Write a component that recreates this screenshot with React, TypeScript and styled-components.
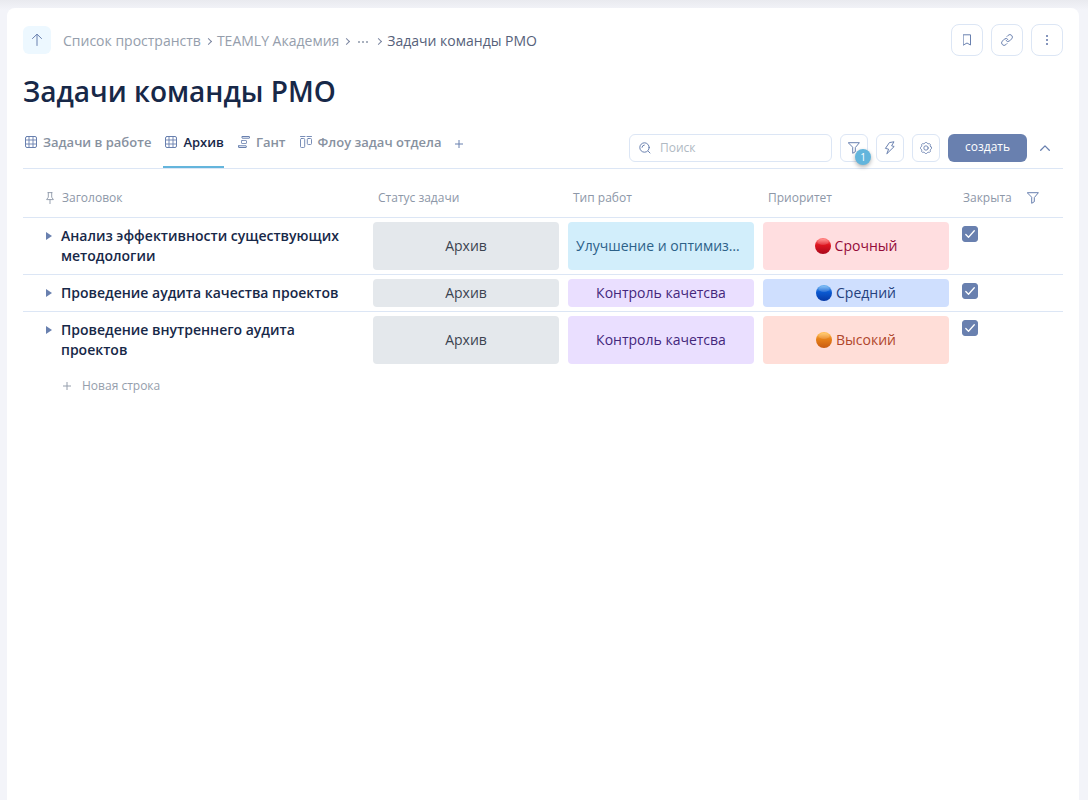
import React from "react";
import styled, { createGlobalStyle, css } from "styled-components";

const GlobalStyle = createGlobalStyle`
  *, *::before, *::after { box-sizing: border-box; }
  body {
    margin: 0;
    background: #f3f4f9;
    color: #172848;
    font-family: "Open Sans", "Noto Sans", sans-serif;
    font-size: 14px;
    line-height: 20px;
  }
  button, input { font: inherit; }
`;

const Page = styled.div`
  display: flex;
  flex-direction: column;
  min-height: 100vh;
  padding: 8px 9px 0 7px;
  background: linear-gradient(#e9eaef, #f3f4f9) top / 100% 10px no-repeat;
`;

const Card = styled.main`
  flex: 1;
  padding: 16px;
  background: #fff;
  border-radius: 8px 8px 0 0;
`;

const TopBar = styled.header`
  display: flex;
  align-items: center;
  justify-content: space-between;
  height: 32px;
`;

const Row = styled.div<{ $gap: number }>`
  display: flex;
  align-items: center;
  gap: ${(p) => p.$gap}px;
`;

const PlainButton = styled.button`
  display: flex;
  align-items: center;
  justify-content: center;
  flex: none;
  padding: 0;
  border: 0;
  background: none;
  color: #6980af;
  cursor: pointer;
`;

const UpButton = styled(PlainButton)`
  width: 28px;
  height: 28px;
  border-radius: 6px;
  background: #edf8ff;
`;

const OutlineButton = styled(PlainButton)<{ $size: number }>`
  position: relative;
  width: ${(p) => p.$size}px;
  height: ${(p) => p.$size}px;
  border: 1px solid #dce6f5;
  border-radius: ${(p) => (p.$size > 28 ? 8 : 6)}px;
`;

const Crumbs = styled.ol`
  display: flex;
  align-items: center;
  margin: 0;
  padding: 2px 0 0;
  list-style: none;
  color: #959eac;
`;

const Crumb = styled.li`
  display: flex;
  align-items: center;

  & + &::before {
    content: "";
    width: 5px;
    height: 5px;
    margin: 1px 6px 0 5px;
    border: solid #7b86a0;
    border-width: 1px 1px 0 0;
    transform: rotate(45deg);
  }
`;

const CrumbLink = styled.a`
  color: inherit;
  text-decoration: none;
  &[aria-current] { color: #56617a; }
`;

const Title = styled.h1`
  margin: 15px 0 0;
  font-size: 28px;
  font-weight: 600;
  line-height: 40px;
`;

const ViewBar = styled.div`
  display: flex;
  justify-content: space-between;
  gap: 16px;
  height: 58px;
  padding-top: 23px;
  border-bottom: 1px solid #dce6f5;
`;

const Tabs = styled.nav`
  display: flex;
  gap: 12px;
`;

const Tab = styled.a`
  display: flex;
  align-items: flex-start;
  gap: 6px;
  padding: 0 0 0 2px;
  border-bottom: 2px solid transparent;
  color: #8791a0;
  font-size: 13px;
  font-weight: 600;
  line-height: 16px;
  text-decoration: none;
  white-space: nowrap;

  svg { margin-top: 2px; color: #6980af; }

  &[aria-current] {
    border-color: #64b5dc;
    color: #172848;
  }
`;

const AddTab = styled(PlainButton)`
  width: 10px;
  height: 20px;
`;

const Search = styled.label`
  display: flex;
  align-items: center;
  gap: 9px;
  width: 203px;
  height: 28px;
  padding: 0 9px;
  border: 1px solid #dce6f5;
  border-radius: 6px;
  color: #6980af;
`;

const SearchInput = styled.input`
  flex: 1;
  min-width: 0;
  padding: 0;
  border: 0;
  outline: 0;
  background: none;
  color: #172848;
  font-size: 12px;
  &::placeholder { color: #b0b9c3; opacity: 1; }
`;

const Badge = styled.span`
  position: absolute;
  top: 14px;
  left: 14px;
  width: 16px;
  height: 16px;
  border-radius: 8px;
  background: #62b5dc;
  box-shadow: 0 2px 4px rgba(0, 0, 0, 0.3);
  color: #fff;
  font-size: 10px;
  line-height: 16px;
  text-align: center;
`;

const CreateButton = styled(PlainButton)`
  width: 79px;
  height: 28px;
  padding-bottom: 2px;
  border-radius: 6px;
  background: #6980af;
  color: #fff;
  font-size: 12px;
  font-weight: 500;
`;

const Collapse = styled(PlainButton)`
  width: 20px;
  height: 28px;
`;

const Tools = styled(Row)`
  height: 28px;
  padding-right: 8px;
`;

const Table = styled.table`
  width: 100%;
  table-layout: fixed;
  border-collapse: separate;
  border-spacing: 0;
`;

const Col = styled.col<{ $width?: number }>`
  ${(p) => p.$width && css`width: ${p.$width}px;`}
`;

const HeadCell = styled.th`
  height: 49px;
  padding: 10px 10px 0;
  border-bottom: 1px solid #dce6f5;
  color: #8d97a8;
  font-size: 12px;
  font-weight: 400;
  text-align: left;

  &:first-child { padding-left: 23px; }
`;

const Cell = styled.td`
  height: 1px;
  padding: 4px 4px 4px 5px;
  border-bottom: 1px solid #dce6f5;
  vertical-align: top;

  tr:last-child > & { border-bottom: 0; }
`;

const NameCell = styled(Cell)`
  padding: 8px 24px 8px 22px;
`;

const CheckCell = styled(Cell)`
  padding: 8px 9px;
`;

const TaskName = styled.div`
  display: flex;
  align-items: flex-start;
  gap: 9px;
  font-weight: 600;
`;

const Expand = styled(PlainButton)`
  width: 7px;
  height: 20px;
`;

type Tone = "gray" | "cyan" | "violet" | "red" | "blue" | "orange";

const tones: Record<Tone, [string, string]> = {
  gray: ["#e4e8ec", "#3b4350"],
  cyan: ["#d2eefb", "#2c6189"],
  violet: ["#eadfff", "#44277c"],
  red: ["#ffdee0", "#940a38"],
  blue: ["#cfdffe", "#24417d"],
  orange: ["#ffded8", "#b0462b"],
};

const Pill = styled.div<{ $tone: Tone }>`
  display: flex;
  align-items: center;
  justify-content: center;
  gap: 4px;
  height: 100%;
  min-height: 28px;
  padding: 0 8px;
  border-radius: 4px;
  background: ${(p) => tones[p.$tone][0]};
  color: ${(p) => tones[p.$tone][1]};
`;

const PillText = styled.span`
  overflow: hidden;
  text-overflow: ellipsis;
  white-space: nowrap;
`;

const CheckWrap = styled.label`
  display: grid;
  width: 16px;
  height: 16px;
  > * { grid-area: 1 / 1; }
  svg { z-index: 1; pointer-events: none; color: #fff; }
`;

const CheckBox = styled.input`
  appearance: none;
  width: 16px;
  height: 16px;
  margin: 0;
  border: 1px solid #6980af;
  border-radius: 3px;
  &:checked { background: #6980af; }
`;

const NewRow = styled(PlainButton)`
  gap: 11px;
  margin: 8px 0 0 40px;
  color: #959eac;
  font-size: 12px;
`;

const Icon = styled.svg`
  flex: none;
`;

const Svg = ({ w, h = w, children, ...rest }: { w: number; h?: number } & React.SVGProps<SVGSVGElement>) => (
  <Icon width={w} height={h} viewBox={`0 0 ${w} ${h}`} fill="none" stroke="currentColor" strokeLinecap="round" strokeLinejoin="round" aria-hidden="true" {...rest}>
    {children}
  </Icon>
);

const GridIcon = () => (
  <Svg w={12}>
    <rect x=".5" y=".5" width="11" height="11" rx="1.5" />
    <path d="M4 .5v11M8 .5v11M.5 4h11M.5 8h11" strokeWidth=".9" />
  </Svg>
);
const GanttIcon = () => (
  <Svg w={12}>
    <rect x="4" y=".5" width="7.500" height="1.700" rx=".3" />
    <rect x="3.500" y="4.500" width="5" height="3" rx=".5" strokeWidth=".8" />
    <rect x=".5" y="9.800" width="7.800" height="1.700" rx=".3" />
  </Svg>
);
const BoardIcon = () => (
  <Svg w={12} strokeWidth=".9">
    <path d="M.5.5h4.500M7 .5h4.500" />
    <rect x=".5" y="2.500" width="4.200" height="9" rx="1" />
    <rect x="7.300" y="2.500" width="4.200" height="6" rx="1" />
  </Svg>
);
const PlusIcon = ({ size = 8 }: { size?: number }) => (
  <Svg w={size} strokeLinecap="butt">
    <path d={`M${size / 2} 0v${size}M0 ${size / 2}h${size}`} />
  </Svg>
);
const FunnelIcon = () => (
  <Svg w={12}>
    <path d="M.6.7h10.800L7.300 5.600v4.100L4.700 11.300V5.600Z" />
  </Svg>
);
const BoltIcon = () => (
  <Svg w={12} h={14}>
    <path d="M5.800 1.500 10 .8 7.600 4.800 10.200 5.500 2.800 12.800 4.600 8.200 1.800 7.500Z" />
  </Svg>
);
const gear = Array.from({ length: 32 }, (_, i) => {
  const r = i % 4 < 2 ? 5.6 : 4.8;
  const a = ((i - 0.5) / 32) * Math.PI * 2;
  return `${(6 + r * Math.cos(a)).toFixed(2)},${(6 + r * Math.sin(a)).toFixed(2)}`;
}).join(" ");
const GearIcon = () => (
  <Svg w={12} strokeWidth=".9">
    <polygon points={gear} />
    <circle cx="6" cy="6" r="2.200" />
  </Svg>
);
const SearchIcon = () => (
  <Svg w={12}>
    <circle cx="5.500" cy="5.500" r="4.700" />
    <path d="M3 5.300A2.600 2.600 0 0 1 5.300 3M9.400 9.400 11 11" />
  </Svg>
);
const PinIcon = () => (
  <Svg w={8} h={12} strokeWidth=".9">
    <path d="M2 .6h4M2.300.6v4.600L.6 7.600h6.800L5.700 5.200V.6M4 7.600v4" />
  </Svg>
);

const balls: Record<string, string[]> = {
  red: ["#ff7776", "#df1620", "#a9081c"],
  blue: ["#68aef0", "#0b5bd3", "#0638a5"],
  orange: ["#ffbd55", "#e88219", "#c95b12"],
};
const Ball = ({ color }: { color: string }) => {
  const id = React.useId();
  return (
    <Svg w={16} stroke="none">
      <defs>
        <linearGradient id={id} x1="0" y1="0" x2="0" y2="1">
          <stop offset=".1" stopColor={balls[color][0]} />
          <stop offset=".42" stopColor={balls[color][1]} />
          <stop offset="1" stopColor={balls[color][2]} />
        </linearGradient>
      </defs>
      <circle cx="8" cy="8" r="8" fill={`url(#${id})`} />
      <ellipse cx="8" cy="4" rx="5.500" ry="3" fill="#fff" opacity=".15" />
    </Svg>
  );
};

const tasks: { name: string; type: [string, Tone]; priority: [string, Tone] }[] = [
  { name: "Анализ эффективности существующих методологии", type: ["Улучшение и оптимизация", "cyan"], priority: ["Срочный", "red"] },
  { name: "Проведение аудита качества проектов", type: ["Контроль качетсва", "violet"], priority: ["Средний", "blue"] },
  { name: "Проведение внутреннего аудита проектов", type: ["Контроль качетсва", "violet"], priority: ["Высокий", "orange"] },
];

export default function App() {
  return (
    <>
      <GlobalStyle />
      <Page>
        <Card>
          <TopBar>
            <Row $gap={12}>
              <UpButton aria-label="Наверх">
                <Svg w={12} h={14}><path d="M6 12.500V1.500M1.500 5.500 6 1.200l4.500 4.300" /></Svg>
              </UpButton>
              <Crumbs>
                <Crumb><CrumbLink href="#spaces">Список пространств</CrumbLink></Crumb>
                <Crumb><CrumbLink href="#academy">TEAMLY Академия</CrumbLink></Crumb>
                <Crumb>
                  <PlainButton aria-label="Показать путь">
                    <Svg w={16} h={20} stroke="none" fill="#aab2bf">
                      <path d="M3 10h2v2H3zM7 10h2v2H7zM11 10h2v2h-2z" />
                    </Svg>
                  </PlainButton>
                </Crumb>
                <Crumb><CrumbLink href="#tasks" aria-current="page">Задачи команды РМО</CrumbLink></Crumb>
              </Crumbs>
            </Row>
            <Row $gap={8}>
              <OutlineButton $size={32} aria-label="В закладки">
                <Svg w={8} h={12}><path d="M.5.8h7v10.200L4 9 .5 11Z" /></Svg>
              </OutlineButton>
              <OutlineButton $size={32} aria-label="Скопировать ссылку">
                <Svg w={12} viewBox="0 0 24 24" strokeWidth="2">
                  <path d="M10 13a5 5 0 0 0 7.540.54l3.800-3.800a5 5 0 0 0-7.070-7.070l-2.200 2.200M14 11a5 5 0 0 0-7.540-.54l-3.800 3.800a5 5 0 0 0 7.070 7.070l2.200-2.200" />
                </Svg>
              </OutlineButton>
              <OutlineButton $size={32} aria-label="Ещё">
                <Svg w={2} h={10} stroke="none" fill="#8696bd"><path d="M0 0h2v2H0zM0 4h2v2H0zM0 8h2v2H0z" /></Svg>
              </OutlineButton>
            </Row>
          </TopBar>

          <Title>Задачи команды РМО</Title>

          <ViewBar>
            <Tabs>
              <Tab href="#work"><GridIcon />Задачи в работе</Tab>
              <Tab href="#archive" aria-current="page"><GridIcon />Архив</Tab>
              <Tab href="#gantt"><GanttIcon />Гант</Tab>
              <Tab href="#flow"><BoardIcon />Флоу задач отдела</Tab>
              <AddTab aria-label="Добавить представление"><PlusIcon /></AddTab>
            </Tabs>
            <Tools $gap={8}>
              <Search>
                <SearchIcon />
                <SearchInput placeholder="Поиск" aria-label="Поиск" />
              </Search>
              <OutlineButton $size={28} aria-label="Фильтры"><FunnelIcon /><Badge>1</Badge></OutlineButton>
              <OutlineButton $size={28} aria-label="Автоматизации"><BoltIcon /></OutlineButton>
              <OutlineButton $size={28} aria-label="Настройки"><GearIcon /></OutlineButton>
              <CreateButton>создать</CreateButton>
              <Collapse aria-label="Свернуть">
                <Svg w={10} h={6} strokeWidth="1.300"><path d="M.7 5.200 5 .9l4.300 4.300" /></Svg>
              </Collapse>
            </Tools>
          </ViewBar>

          <Table>
            <colgroup>
              <Col /><Col $width={195} /><Col $width={195} /><Col $width={195} /><Col $width={110} />
            </colgroup>
            <thead>
              <tr>
                <HeadCell><Row $gap={8}><PinIcon />Заголовок</Row></HeadCell>
                <HeadCell>Статус задачи</HeadCell>
                <HeadCell>Тип работ</HeadCell>
                <HeadCell>Приоритет</HeadCell>
                <HeadCell>
                  <Row $gap={15}>
                    Закрыта
                    <PlainButton aria-label="Фильтр по столбцу"><FunnelIcon /></PlainButton>
                  </Row>
                </HeadCell>
              </tr>
            </thead>
            <tbody>
              {tasks.map((t) => (
                <tr key={t.name}>
                  <NameCell>
                    <TaskName>
                      <Expand aria-label="Развернуть">
                        <Svg w={7} h={8} stroke="none" fill="currentColor"><path d="M1 0 7 4 1 8Z" /></Svg>
                      </Expand>
                      {t.name}
                    </TaskName>
                  </NameCell>
                  <Cell><Pill $tone="gray"><PillText>Архив</PillText></Pill></Cell>
                  <Cell><Pill $tone={t.type[1]}><PillText>{t.type[0]}</PillText></Pill></Cell>
                  <Cell>
                    <Pill $tone={t.priority[1]}>
                      <Ball color={t.priority[1]} />
                      <PillText>{t.priority[0]}</PillText>
                    </Pill>
                  </Cell>
                  <CheckCell>
                    <CheckWrap>
                      <CheckBox type="checkbox" defaultChecked aria-label={`Закрыта: ${t.name}`} />
                      <Svg w={16} strokeWidth="1.300"><path d="M3.800 8.500 6.500 11.200 12.300 4.800" /></Svg>
                    </CheckWrap>
                  </CheckCell>
                </tr>
              ))}
            </tbody>
          </Table>
          <NewRow><PlusIcon />Новая строка</NewRow>
        </Card>
      </Page>
    </>
  );
}
